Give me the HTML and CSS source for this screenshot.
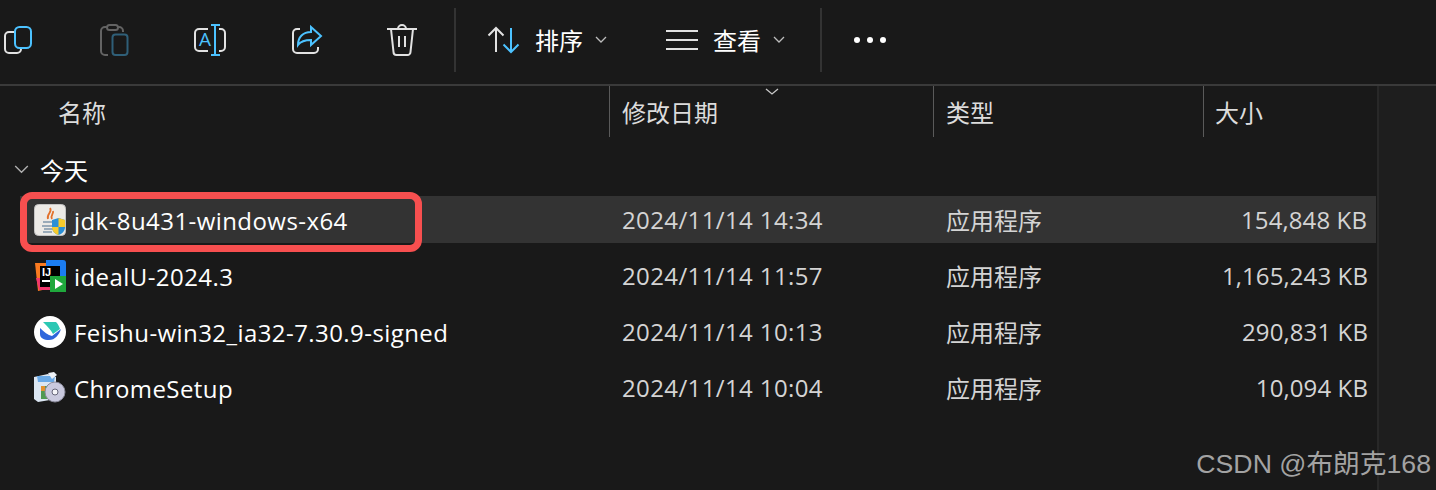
FILE: index.html
```html
<!DOCTYPE html>
<html lang="zh-CN">
<head>
  <meta charset="UTF-8" />
  <title>今天</title>
  <link rel="stylesheet" href="styles.css">
</head>
<body>

  <div class="toolbar">
    <svg class="tool" viewBox="0 0 36 36"><path class="w" d="M14 10H9a4 4 0 0 0-4 4v13a4 4 0 0 0 4 4h8a4 4 0 0 0 4-4"/><rect class="b" x="15" y="5" width="16" height="21" rx="4.500"/></svg>
    <svg class="tool" viewBox="0 0 36 36"><path class="g" d="M11 5H9a4 4 0 0 0-4 4v20a4 4 0 0 0 4 4h3M22 5h1a4 4 0 0 1 4 4v1"/><rect class="g" x="11" y="3" width="11" height="5" rx="2.500"/><rect class="db" x="16.500" y="12.500" width="15" height="20.500" rx="3"/></svg>
    <svg class="tool" viewBox="0 0 36 36"><path class="w" d="M16 7H7a4 4 0 0 0-4 4v14a4 4 0 0 0 4 4h9M27 7h2a4 4 0 0 1 4 4v14a4 4 0 0 1-4 4h-2"/><path class="b" d="M23 3v30M19 3h9M19 33h9"/><text class="glyph" x="7" y="24">A</text></svg>
    <svg class="tool" viewBox="0 0 36 36"><path class="w" d="M12 7H9a4 4 0 0 0-4 4v16a4 4 0 0 0 4 4h17a4 4 0 0 0 4-4v-2"/><path class="b" d="M23 5l10 9-10 9v-5c-6 0-10 1-13 5 0-8 5-13 13-13z"/></svg>
    <svg class="tool" viewBox="0 0 36 36"><path class="w" d="M3 7h30M7 7l2.500 23a3 3 0 0 0 3 3h11a3 3 0 0 0 3-3L29 7M14 7a4 4 0 0 1 8 0M15 14v11M21 14v11"/></svg>
    <span class="sep"></span>
    <button class="btn sort">
      <svg class="tool" viewBox="0 0 36 36"><path class="w" d="M10 30V6M2.500 13.500L10 6l7.500 7.500"/><path class="b" d="M25 6v24M17.500 22.500L25 30l7.500-7.500"/></svg>
      <span>排序</span>
      <svg class="chev" viewBox="0 0 12 8"><path d="M1 1l5 5 5-5"/></svg>
    </button>
    <button class="btn view">
      <svg class="tool" viewBox="0 0 36 36"><path class="w" d="M2 9h32M2 18h32M2 27h32"/></svg>
      <span>查看</span>
      <svg class="chev" viewBox="0 0 12 8"><path d="M1 1l5 5 5-5"/></svg>
    </button>
    <span class="sep sep2"></span>
    <div class="dots"><i></i><i></i><i></i></div>
  </div>

  <div class="main">
    <div class="list">
      <div class="head">
        <div class="c-name">名称</div>
        <div class="c-date">修改日期<svg class="sort-mark" viewBox="0 0 14 7"><path d="M1 1l6 5 6-5"/></svg></div>
        <div class="c-type">类型</div>
        <div class="c-size">大小</div>
      </div>

      <div class="group">
        <svg class="group-chev" viewBox="0 0 16 10"><path d="M1 1l7 7 7-7"/></svg>
        <span>今天</span>
      </div>

      <div class="row selected">
        <div class="c-name">
          <svg class="ficon" viewBox="0 0 32 32">
            <rect x="0.500" y="0.500" width="31" height="31" rx="4" fill="#eceae6" stroke="#c4c4c4"/>
            <path d="M16 4c3 4-4 6-2 11M19 7c1 3-3 4-1 8" fill="none" stroke="#e2702a" stroke-width="1.800"/>
            <path d="M9 18h9M8 22h11M10 25h9M9 28h9" stroke="#7f97ab" stroke-width="1.500"/>
            <path d="M18 16l6.500-2 6.500 2v7c0 4-3 7-6.500 8-3.500-1-6.500-4-6.500-8z" fill="#2a8fd6"/>
            <path d="M24.500 14l6.500 2v7h-6.500zM18 23h6.500v8c-3.500-1-6.500-4-6.500-8z" fill="#f7cb2d"/>
          </svg>
          <span class="fname">jdk-8u431-windows-x64</span>
        </div>
        <div class="c-date">2024/11/14 14:34</div>
        <div class="c-type">应用程序</div>
        <div class="c-size">154,848 KB</div>
        <span class="mark"></span>
      </div>

      <div class="row">
        <div class="c-name">
          <svg class="ficon" viewBox="0 0 32 32">
            <path d="M1 3h12v26l-9 2z" fill="#f97a20"/>
            <path d="M12 0h17a3 3 0 0 1 3 3v16H12z" fill="#1b7cf0"/>
            <path d="M2 18h14v12H5z" fill="#f2366c"/>
            <rect x="6" y="6" width="20" height="21" fill="#000"/>
            <text class="ij" x="8" y="16">IJ</text>
            <rect x="8" y="20" width="8" height="2" fill="#fff"/>
            <rect x="16" y="16" width="16" height="16" fill="#1fa83c"/>
            <path d="M21 19l8 5-8 5z" fill="#fff"/>
          </svg>
          <span class="fname">idealU-2024.3</span>
        </div>
        <div class="c-date">2024/11/14 11:57</div>
        <div class="c-type">应用程序</div>
        <div class="c-size">1,165,243 KB</div>
      </div>

      <div class="row">
        <div class="c-name">
          <svg class="ficon" viewBox="0 0 32 32">
            <circle cx="16" cy="16" r="16" fill="#fff"/>
            <path d="M9 6h13c2 2 3 4 4 7l-7 5c-2-4-6-8-10-12z" fill="#2cc8b4"/>
            <path d="M6 12c4 4 8 7 12 8l9-7c-2 6-6 11-12 11-5 0-9-2-9-6z" fill="#2f66db"/>
          </svg>
          <span class="fname">Feishu-win32_ia32-7.30.9-signed</span>
        </div>
        <div class="c-date">2024/11/14 10:13</div>
        <div class="c-type">应用程序</div>
        <div class="c-size">290,831 KB</div>
      </div>

      <div class="row">
        <div class="c-name">
          <svg class="ficon" viewBox="0 0 32 32">
            <path d="M0 5l14-3 8 3v22l-18 3-4-3z" fill="#dbe6f2"/>
            <path d="M3 4h18l-1 6H4z" fill="#6aa9e6"/>
            <path d="M14 1l6-1 3 3-5 4z" fill="#eef2f7"/>
            <rect x="7" y="14" width="7" height="13" fill="#4f9a52"/>
            <rect x="7" y="14" width="4" height="5" fill="#e2912f"/>
            <circle cx="21" cy="20" r="10" fill="#c9c9de"/>
            <circle cx="21" cy="20" r="10" fill="none" stroke="#8a8a9a"/>
            <circle cx="21" cy="20" r="3" fill="#f4f4f8" stroke="#66667a"/>
          </svg>
          <span class="fname">ChromeSetup</span>
        </div>
        <div class="c-date">2024/11/14 10:04</div>
        <div class="c-type">应用程序</div>
        <div class="c-size">10,094 KB</div>
      </div>
    </div>
    <div class="track"></div>
  </div>

  <div class="watermark">CSDN @布朗克168</div>

</body>
</html>
```

FILE: styles.css
```css
body {
  margin: 0;
  height: 490px;
  overflow: hidden;
  position: relative;
  background: #191919;
  color: #fff;
  font-family: 'Open Sans', 'Noto Sans CJK SC', sans-serif;
  font-size: 24px;
}

.toolbar {
  display: flex;
  align-items: center;
  height: 80px;
  padding-bottom: 4px;
  border-bottom: 2px solid #3a3a3a;
}

.tool {
  width: 36px;
  height: 36px;
  flex: none;
  margin-right: 60px;
  fill: none;
  stroke-width: 2;
}

.toolbar > .tool:nth-child(5) {
  margin-right: 0;
}

.w { stroke: #e2e2e2; }
.b { stroke: #4cc2ff; }
.g { stroke: #636363; }
.db { stroke: #2f5f78; }

.glyph {
  font-family: 'Open Sans', sans-serif;
  font-size: 19px;
  fill: #4cc2ff;
}

.sep {
  width: 2px;
  height: 64px;
  margin-left: 34px;
  background: #333;
}

.sep2 {
  margin-left: 35px;
}

.btn {
  display: flex;
  align-items: center;
  padding: 0;
  border: none;
  background: none;
  color: #fff;
  font: inherit;
}

.btn span {
  margin-top: -2px;
}

.btn .tool {
  margin-right: 13px;
}

.sort {
  margin-left: 30px;
}

.view {
  margin-left: 57px;
}

.chev {
  width: 12px;
  height: 8px;
  margin-left: 12px;
  fill: none;
  stroke: #bdbdbd;
  stroke-width: 1.300;
}

.dots {
  display: flex;
  gap: 7px;
  margin-left: 32px;
}

.dots i {
  width: 6px;
  height: 6px;
  border-radius: 50%;
  background: #fff;
}

.main {
  display: flex;
  height: 404px;
}

.list {
  width: 1377px;
  flex: none;
}

.track {
  flex: 1;
  background: #1e1e1e;
  border-left: 2px solid #282828;
}

.head, .row {
  display: grid;
  grid-template-columns: 609px 324px 270px 174px;
}

.head {
  height: 51px;
  color: #dcdcdc;
}

.head > div {
  display: flex;
  align-items: center;
  position: relative;
  padding-left: 12px;
  border-left: 1px solid #5a5a5a;
}

.head .c-name {
  padding-left: 58px;
  border-left: none;
}

.head .c-size {
  padding-left: 11px;
}

.sort-mark {
  position: absolute;
  left: 155px;
  top: 2px;
  width: 14px;
  height: 7px;
  fill: none;
  stroke: #c8c8c8;
  stroke-width: 1.300;
}

.group {
  display: flex;
  align-items: center;
  height: 53px;
  padding: 6px 0 0 14px;
}

.group-chev {
  width: 15px;
  height: 9px;
  margin-right: 11px;
  fill: none;
  stroke: #b0b0b0;
  stroke-width: 1.500;
}

.row {
  position: relative;
  align-items: center;
  height: 47px;
  margin-bottom: 9px;
  color: #d4d4d4;
}

.row > div {
  padding-left: 13px;
}

.row .c-name {
  display: flex;
  align-items: center;
  padding-left: 34px;
  color: #fff;
}

.fname {
  padding-top: 2px;
  letter-spacing: 0.43px;
}

.row .c-date {
  letter-spacing: 0.38px;
}

.row .c-size {
  padding: 0 9px 0 0;
  text-align: right;
  letter-spacing: 0.1px;
}

.ficon {
  width: 32px;
  height: 32px;
  flex: none;
  margin-right: 8px;
}

.ij {
  font-family: 'Liberation Sans', sans-serif;
  font-size: 11px;
  font-weight: bold;
  fill: #fff;
}

.selected {
  background: #333;
  margin-left: 20px;
  grid-template-columns: 589px 324px 270px 173px;
  margin-right: 1px;
}

.selected > .c-name {
  padding-left: 14px;
}

.mark {
  position: absolute;
  left: 0;
  top: -4px;
  width: 388px;
  height: 46px;
  border: 7px solid #f74f4f;
  border-radius: 12px;
}

.watermark {
  position: absolute;
  right: 5px;
  bottom: 9px;
  font-family: 'Liberation Sans', 'Noto Sans CJK SC', sans-serif;
  font-size: 26.700px;
  color: #a3a3a3;
}
```
